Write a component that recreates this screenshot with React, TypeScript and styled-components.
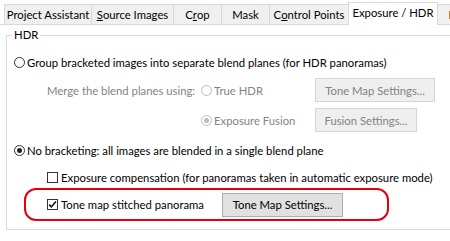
import React from "react";
import styled, { createGlobalStyle } from "styled-components";

const GlobalStyle = createGlobalStyle`
  html, body {
    margin: 0;
    padding: 0;
    background: #fff;
  }
  body {
    font-family: Lato, "Noto Sans", sans-serif;
    font-size: 11.3px;
    color: #000;
  }
`;

const Window = styled.div`
  width: 450px;
  height: 241px;
  overflow: hidden;
  background: #fff;
`;

const TabStrip = styled.div`
  display: flex;
  align-items: flex-end;
  height: 25px;
  padding-left: 4px;
  box-sizing: border-box;
  border-bottom: 1px solid #d9d9d9;
`;

const Tab = styled.div<{ $width: number; $active?: boolean }>`
  flex: none;
  box-sizing: border-box;
  width: ${(p) => p.$width}px;
  height: ${(p) => (p.$active ? 23 : 20)}px;
  margin-left: -1px;
  margin-bottom: ${(p) => (p.$active ? -1 : 0)}px;
  padding-bottom: ${(p) => (p.$active ? 3 : 0)}px;
  border: 1px solid #d9d9d9;
  border-bottom: none;
  background: ${(p) => (p.$active ? "#fff" : "#f0f0f0")};
  position: relative;
  z-index: ${(p) => (p.$active ? 1 : 0)};
  display: flex;
  align-items: center;
  justify-content: center;
  white-space: nowrap;
  overflow: hidden;
  line-height: 1;

  &:first-child {
    margin-left: 0;
  }
`;

const GroupBox = styled.div`
  position: relative;
  margin: 10px 0 0 6px;
  width: 470px;
  height: 195px;
  box-sizing: border-box;
  border: 1px solid #dcdcdc;
  border-right: none;
  padding: 18px 0 0 7px;
  display: flex;
  flex-direction: column;
  align-items: flex-start;
`;

const Legend = styled.span`
  position: absolute;
  top: -9px;
  left: 5px;
  padding: 0 2px;
  background: #fff;
  line-height: 16px;
`;

const OptionRow = styled.label<{ $indent?: number; $top: number }>`
  display: flex;
  align-items: center;
  gap: 2px;
  height: 16px;
  margin-left: ${(p) => p.$indent ?? 0}px;
  margin-top: ${(p) => p.$top}px;
  white-space: nowrap;
`;

const Radio = styled.span<{ $checked?: boolean; $disabled?: boolean }>`
  flex: none;
  width: 11px;
  height: 11px;
  box-sizing: border-box;
  border-radius: 50%;
  border: 1px solid ${(p) => (p.$disabled ? "#bcbcbc" : "#333")};
  background: #fff;
  display: flex;
  align-items: center;
  justify-content: center;

  &::after {
    content: "";
    display: ${(p) => (p.$checked ? "block" : "none")};
    width: 5px;
    height: 5px;
    border-radius: 50%;
    background: ${(p) => (p.$disabled ? "#bcbcbc" : "#222")};
  }
`;

const CheckBox = styled.span`
  flex: none;
  width: 11px;
  height: 11px;
  box-sizing: border-box;
  border: 1px solid #333;
  background: #fff;
  display: flex;
  align-items: center;
  justify-content: center;
  margin-right: 1px;
`;

const MergeGrid = styled.div`
  display: grid;
  grid-template-columns: 154px 114px auto;
  grid-auto-rows: 24px;
  row-gap: 6px;
  align-items: center;
  margin: 8px 0 0 33px;
  color: #838383;
  white-space: nowrap;
`;

const RadioLabel = styled.span`
  display: flex;
  align-items: center;
  gap: 2px;
`;

const Button = styled.button<{ $width: number; $disabled?: boolean }>`
  width: ${(p) => p.$width}px;
  height: 24px;
  box-sizing: border-box;
  padding: 0;
  font: inherit;
  border: 1px solid ${(p) => (p.$disabled ? "#d5d5d5" : "#adadad")};
  background: ${(p) => (p.$disabled ? "#efefef" : "#e1e1e1")};
  color: ${(p) => (p.$disabled ? "#838383" : "#000")};
  white-space: nowrap;
`;

const Highlight = styled.div`
  display: flex;
  align-items: center;
  width: 365px;
  height: 33px;
  box-sizing: border-box;
  margin: 3px 0 0 10px;
  padding-left: 21px;
  border: 2px solid #e3000f;
  border-radius: 12px;
`;

const CheckLabel = styled.label`
  display: flex;
  align-items: center;
  gap: 2px;
  width: 175px;
  white-space: nowrap;
`;

const Check = () => (
  <CheckBox>
    <svg width="9" height="9" viewBox="0 0 9 9">
      <path d="M1.2 4.6 L3.4 6.9 L7.9 1.6" fill="none" stroke="#111" strokeWidth="1.6" />
    </svg>
  </CheckBox>
);

const tabs = [
  { label: <>Project Assistant</>, width: 88 },
  { label: <><u>S</u>ource Images</>, width: 83 },
  { label: <>C<u>r</u>op</>, width: 49 },
  { label: <>Mask</>, width: 49 },
  { label: <>C<u>o</u>ntrol Points</>, width: 80 },
  { label: <>Exposure / HDR</>, width: 90, active: true },
  { label: <>P</>, width: 30 },
];

export default function App() {
  return (
    <Window>
      <GlobalStyle />
      <TabStrip>
        {tabs.map((t, i) => (
          <Tab key={i} $width={t.width} $active={t.active}>
            {t.label}
          </Tab>
        ))}
      </TabStrip>
      <GroupBox>
        <Legend>HDR</Legend>
        <OptionRow $top={0}>
          <Radio />
          Group bracketed images into separate blend planes (for HDR panoramas)
        </OptionRow>
        <MergeGrid>
          <span>Merge the blend planes using:</span>
          <RadioLabel>
            <Radio $disabled />
            True HDR
          </RadioLabel>
          <Button $width={120} $disabled>Tone Map Settings...</Button>
          <span />
          <RadioLabel>
            <Radio $disabled $checked />
            Exposure Fusion
          </RadioLabel>
          <Button $width={102} $disabled>Fusion Settings...</Button>
        </MergeGrid>
        <OptionRow $top={10}>
          <Radio $checked />
          No bracketing: all images are blended in a single blend plane
        </OptionRow>
        <OptionRow $top={11} $indent={33}>
          <CheckBox />
          Exposure compensation (for panoramas taken in automatic exposure mode)
        </OptionRow>
        <Highlight>
          <CheckLabel>
            <Check />
            Tone map stitched panorama
          </CheckLabel>
          <Button $width={121}>Tone Map Settings...</Button>
        </Highlight>
      </GroupBox>
    </Window>
  );
}
